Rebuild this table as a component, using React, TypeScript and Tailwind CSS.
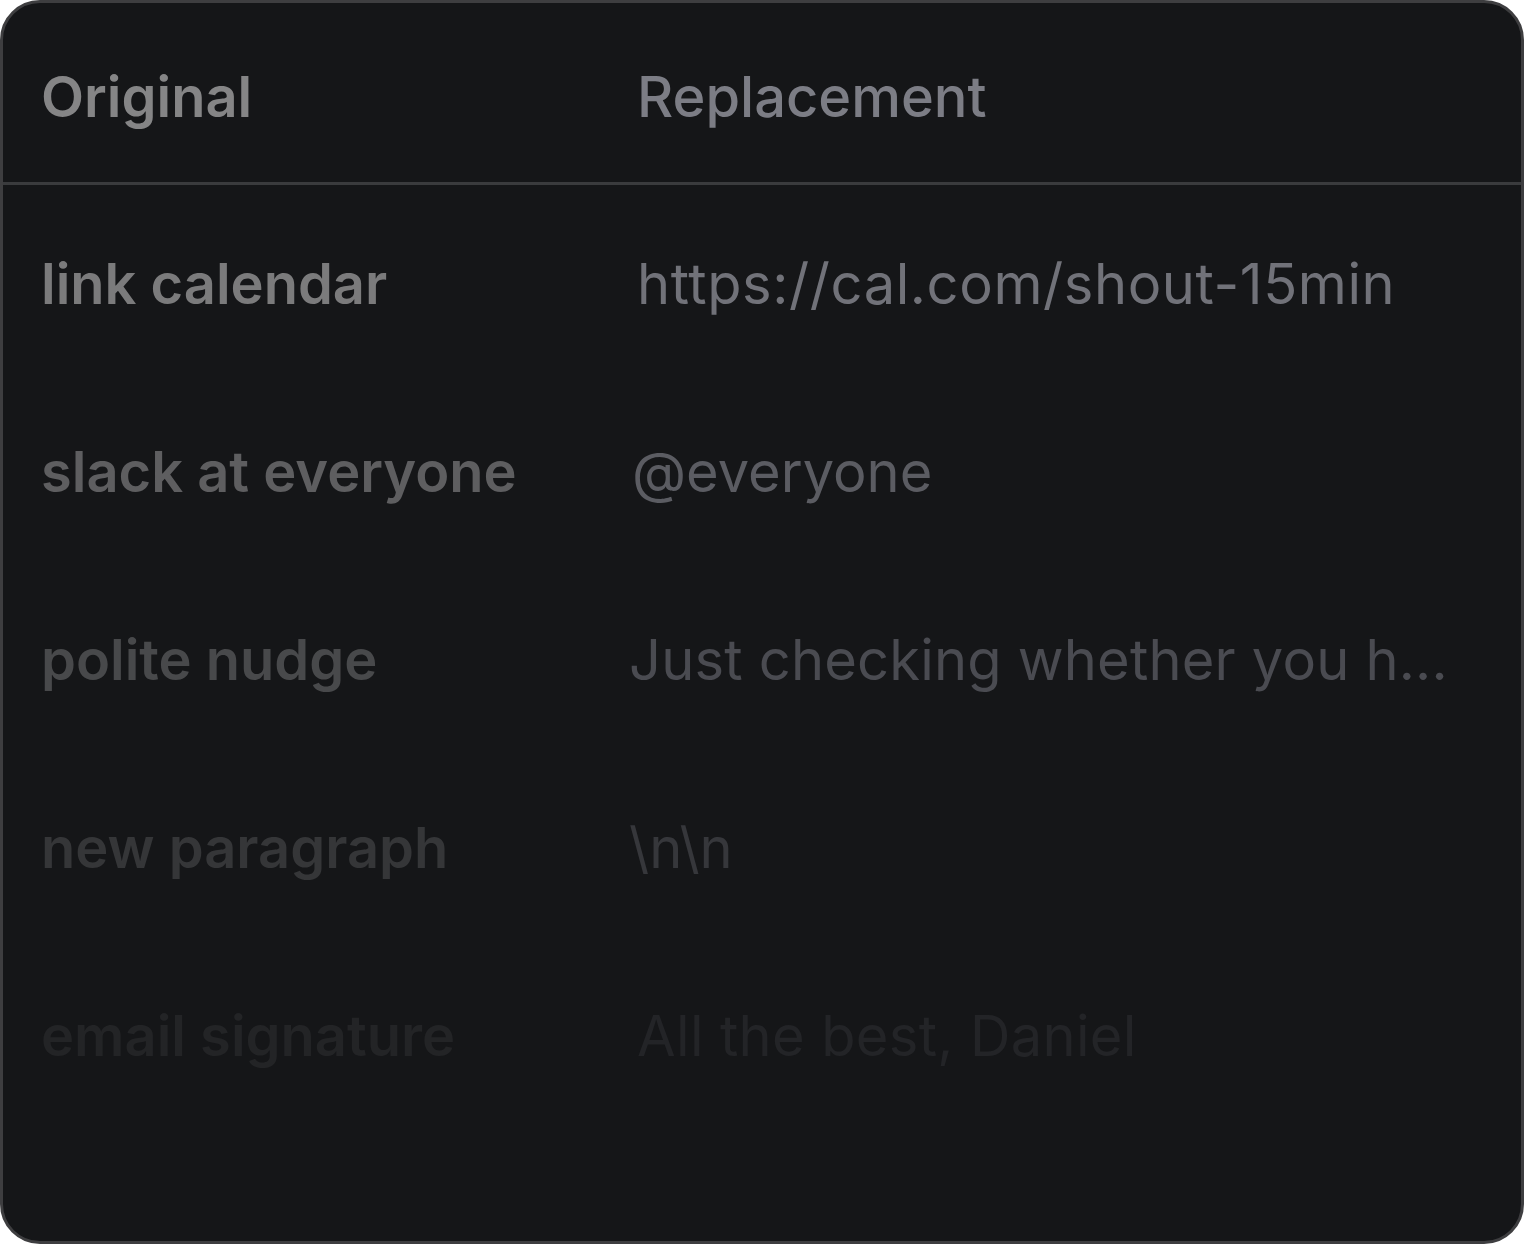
import React from "react";

const rows = [
  { o: "link calendar", r: "https://cal.com/shout-15min", oc: "text-[#7b7b7c]", rc: "text-[#717279] tracking-[0.6px]" },
  { o: "slack at everyone", r: "@everyone", oc: "text-[#5e5e60]", rc: "text-[#5b5c62] ml-[-5px]" },
  { o: "polite nudge", r: "Just checking whether you h...", oc: "text-[#48494b]", rc: "text-[#4a4b51] ml-[-8px] tracking-[0.2px]" },
  { o: "new paragraph", r: "\\n\\n", oc: "text-[#353638]", rc: "text-[#36373b] ml-[-8px]" },
  { o: "email signature", r: "All the best, Daniel", oc: "text-[#232426]", rc: "text-[#232427] tracking-[0.35px]" },
];

export default function App() {
  return (
    <div className="w-[1524px] h-[1244px] bg-white" style={{ fontFamily: "Inter, 'Noto Sans', sans-serif" }}>
      <div className="w-full h-full rounded-[40px] border-[3px] border-[#3e3e40] bg-[#151618] overflow-hidden flex flex-col">
        <div className="h-[182px] shrink-0 flex items-center border-b-[3px] border-[#3a3b3d] pl-[38px] pt-[9px] text-[56px]">
          <div className="w-[596px] font-semibold text-[#858586]">Original</div>
          <div className="font-medium text-[#7c7d85]">Replacement</div>
        </div>
        {rows.map((row) => (
          <div key={row.o} className="h-[188px] shrink-0 flex items-center pl-[38px] pt-[9px] text-[56px]">
            <div className={"w-[596px] shrink-0 font-semibold " + row.oc}>{row.o}</div>
            <div className={"font-normal whitespace-nowrap " + row.rc}>{row.r}</div>
          </div>
        ))}
      </div>
    </div>
  );
}
